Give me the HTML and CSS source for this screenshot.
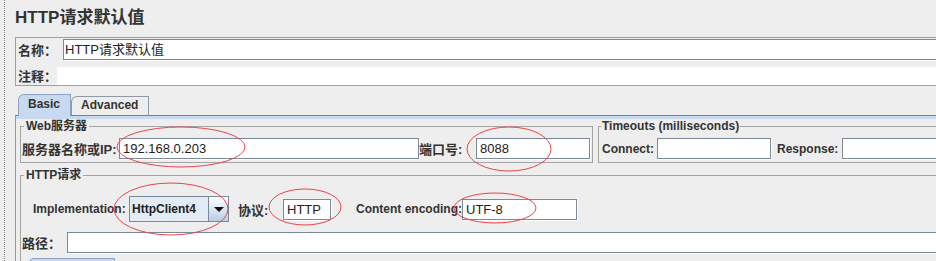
FILE: index.html
```html
<!DOCTYPE html>
<html>
<head>
    <meta charset="UTF-8">
    <link rel="stylesheet" href="styles.css">
</head>
<body>
<div class="page">
    <div class="frame">
        <h1 class="title">HTTP请求默认值</h1>

        <div class="name-panel">
            <div class="name-row">
                <span class="lbl w-name">名称：</span>
                <div class="field grow">HTTP请求默认值</div>
            </div>
            <div class="comment-row">
                <span class="lbl w-comment">注释：</span>
                <div class="comment grow"></div>
            </div>
        </div>

        <div class="tabs">
            <span class="tab active">Basic</span>
            <span class="tab">Advanced</span>
        </div>

        <div class="tab-panel">
            <div class="server-row">
                <fieldset class="group web">
                    <legend>Web服务器</legend>
                    <div class="row">
                        <span class="lbl w-host">服务器名称或IP:</span>
                        <div class="field w-ip">192.168.0.203</div>
                        <span class="lbl w-port">端口号:</span>
                        <div class="field w-portnum">8088</div>
                    </div>
                </fieldset>
                <fieldset class="group timeouts">
                    <legend>Timeouts (milliseconds)</legend>
                    <div class="row">
                        <span class="lbl en w-connect">Connect:</span>
                        <div class="field w-timeout"></div>
                        <span class="lbl en w-response">Response:</span>
                        <div class="field w-timeout"></div>
                    </div>
                </fieldset>
            </div>

            <fieldset class="group http">
                <legend>HTTP请求</legend>
                <div class="row impl-row">
                    <span class="lbl en w-impl">Implementation:</span>
                    <div class="combo">
                        <span class="combo-text">HttpClient4</span>
                        <span class="combo-btn"><span class="arrow"></span></span>
                    </div>
                    <span class="lbl w-proto">协议:</span>
                    <div class="field w-http">HTTP</div>
                    <span class="lbl en w-enc">Content encoding:</span>
                    <div class="field w-utf">UTF-8</div>
                </div>
                <div class="row path-row">
                    <span class="lbl w-path">路径：</span>
                    <div class="field grow"></div>
                </div>
                <div class="subtab"></div>
            </fieldset>
        </div>
    </div>

    <!-- red marks drawn over the screenshot -->
    <svg class="marks" width="936" height="261" viewBox="0 0 936 261">
        <ellipse cx="181" cy="147" rx="64" ry="20"/>
        <ellipse cx="509" cy="149" rx="42" ry="22"/>
        <ellipse cx="171" cy="209" rx="57" ry="26"/>
        <ellipse cx="305" cy="207" rx="36" ry="18"/>
        <ellipse cx="495" cy="208" rx="41" ry="15"/>
    </svg>
</div>
</body>
</html>
```

FILE: styles.css
```css
body {
    margin: 0;
    background: #eeeeee;
    overflow: hidden;
    font-family: "Liberation Sans", "Noto Sans CJK SC", sans-serif;
    color: #333;
}

.page {
    position: relative;
    width: 936px;
    height: 261px;
    overflow: hidden;
}

.frame {
    margin-left: 4px;
    border-left: 1px dotted #8c8c8c;
    padding-left: 10px;
    width: 1000px;
    height: 261px;
}

.title {
    margin: 0 0 8px;
    padding-top: 7px;
    font-size: 17px;
    line-height: 22px;
    font-weight: bold;
    color: #333;
}

.lbl {
    font-size: 13px;
    font-weight: bold;
    white-space: nowrap;
    flex: none;
}
.lbl.en {
    font-size: 12px;
}

.field {
    height: 21px;
    box-sizing: border-box;
    border: 1px solid #7a8a99;
    box-shadow: 1px 1px 0 #fff;
    background: #fff;
    font-size: 13px;
    line-height: 19px;
    padding: 0 3px;
    color: #222;
    white-space: nowrap;
    flex: none;
}
.grow {
    flex: 1;
}

/* name / comment */
.name-panel {
    border: 1px solid #a0a0a0;
    padding: 1px 0 0 1px;
}
.name-row,
.comment-row,
.row {
    display: flex;
    align-items: center;
}
.w-name {
    width: 45px;
    padding-left: 1px;
}
.name-row .field {
    padding-left: 1px;
}
.comment-row {
    margin-top: 6px;
}
.w-comment {
    width: 39px;
    padding-left: 1px;
}
.comment {
    height: 18px;
    background: #fff;
}

/* tabs */
.tabs {
    display: flex;
    align-items: flex-end;
    margin-top: 8px;
    padding-left: 3px;
    height: 21px;
}
.tab {
    box-sizing: border-box;
    height: 19px;
    border: 1px solid #8e9aa8;
    border-bottom: none;
    border-top-left-radius: 6px;
    font-size: 12px;
    font-weight: bold;
    line-height: 17px;
    padding: 0 10px 0 9px;
    color: #333;
}
.tab.active {
    position: relative;
    z-index: 1;
    height: 22px;
    margin-bottom: -1px;
    background: #c8daf0;
    border-color: #8da2c0;
    line-height: 19px;
}

.tab-panel {
    border-top: 1px solid #6382bf;
    border-left: 1px solid #8a9ab0;
    padding: 3px 0 0 4px;
    background: linear-gradient(#c8daf0, #c8daf0) top / 100% 3px no-repeat;
}

/* titled groups */
.group {
    margin: 0;
    border: 1px solid #a5a5a5;
    padding: 0 0 3px 1px;
    min-width: 0;
}
.group legend {
    margin-left: 2px;
    padding: 0 2px;
    font-size: 12px;
    font-weight: bold;
    line-height: 15px;
    color: #333;
}
.group .row {
    margin-top: 4px;
}

.server-row {
    display: flex;
    gap: 5px;
}
.web {
    width: 573px;
    box-sizing: border-box;
    flex: none;
}
.timeouts {
    flex: 1;
    padding-left: 3px;
}
.timeouts legend {
    margin-left: -1px;
    padding: 0 1px;
}

.w-host { width: 97px; }
.w-ip { width: 300px; }
.w-port { width: 57px; }
.w-portnum { width: 114px; }
.w-connect { width: 55px; }
.w-timeout { width: 114px; }
.w-response { width: 65px; margin-left: 6px; }

.http {
    margin-top: 5px;
}
.impl-row {
    padding-left: 11px;
}
.group .impl-row {
    margin-top: 13px;
}
.w-impl { width: 96px; }
.w-proto { width: 45px; margin-left: 9px; }
.w-http { width: 48px; }
.w-enc { width: 106px; margin-left: 25px; }
.w-utf { width: 115px; }

.combo {
    display: flex;
    width: 100px;
    height: 26px;
    box-sizing: border-box;
    border: 1px solid #7a8a99;
    background: #e3ebf5;
    flex: none;
}
.combo-text {
    flex: 1;
    padding-left: 2px;
    font-size: 12px;
    font-weight: bold;
    line-height: 24px;
    color: #222;
}
.combo-btn {
    width: 19px;
    border-left: 1px solid #7a8a99;
    background: linear-gradient(#ffffff, #b9cde4);
    display: flex;
    align-items: center;
    justify-content: center;
}
.arrow {
    width: 0;
    height: 0;
    border-left: 5px solid transparent;
    border-right: 5px solid transparent;
    border-top: 5px solid #111;
    margin-top: 1px;
}

.group .path-row {
    margin-top: 10px;
}
.w-path { width: 45px; }

.subtab {
    margin: 5px 0 0 7px;
    width: 84px;
    height: 10px;
    border: 1px solid #8da2c0;
    border-bottom: none;
    border-top-left-radius: 5px;
    background: #c8daf0;
}

.marks {
    position: absolute;
    top: 0;
    left: 0;
    pointer-events: none;
}
.marks ellipse {
    fill: none;
    stroke: #e8464a;
    stroke-width: 1;
}
```
